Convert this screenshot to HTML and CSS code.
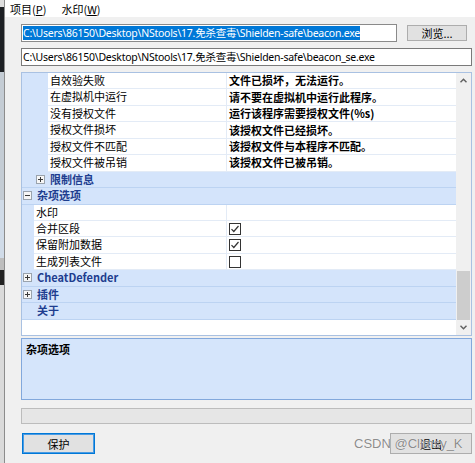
FILE: index.html
```html
<!DOCTYPE html>
<html lang="zh-CN">
<head>
<meta charset="utf-8">
<title>Shielden</title>
<link rel="stylesheet" href="styles.css">
</head>
<body>
<div class="screen">
  <div class="desk">
    <div class="dk a"></div>
    <div class="dk b"></div>
    <div class="dk c"></div>
    <div class="dk d"></div>
    <div class="dk e"></div>
    <div class="dk f"></div>
    <div class="dk g"></div>
  </div>
  <div class="win">
    <div class="menubar">
      <span class="menu">项目(<u>P</u>)</span>
      <span class="menu">水印(<u>W</u>)</span>
    </div>
    <div class="content">
      <div class="file-row">
        <div class="tb tb-in"><span class="sel">C:\Users\86150\Desktop\NStools\17.免杀查毒\Shielden-safe\beacon.exe</span></div>
        <button class="btn browse">浏览...</button>
      </div>
      <div class="tb tb-out">C:\Users\86150\Desktop\NStools\17.免杀查毒\Shielden-safe\beacon_se.exe</div>

      <div class="pg">
        <div class="pg-rows">
          <div class="row l2"><div class="gut"></div><div class="name">自效验失败</div><div class="val">文件已损坏，无法运行。</div></div>
          <div class="row l2"><div class="gut"></div><div class="name">在虚拟机中运行</div><div class="val">请不要在虚拟机中运行此程序。</div></div>
          <div class="row l2"><div class="gut"></div><div class="name">没有授权文件</div><div class="val">运行该程序需要授权文件(%s)</div></div>
          <div class="row l2"><div class="gut"></div><div class="name">授权文件损坏</div><div class="val">该授权文件已经损坏。</div></div>
          <div class="row l2"><div class="gut"></div><div class="name">授权文件不匹配</div><div class="val">该授权文件与本程序不匹配。</div></div>
          <div class="row l2"><div class="gut"></div><div class="name">授权文件被吊销</div><div class="val">该授权文件已被吊销。</div></div>
          <div class="row cat c1">
            <svg class="exp" width="9" height="9" viewBox="0 0 9 9"><rect x="0.5" y="0.5" width="8" height="8" fill="#f6f6f6" stroke="#9aa3ad"/><path d="M2 4.5h5M4.5 2v5" stroke="#3a3a3a"/></svg>
            <span>限制信息</span>
          </div>
          <div class="row cat c0">
            <svg class="exp" width="9" height="9" viewBox="0 0 9 9"><rect x="0.5" y="0.5" width="8" height="8" fill="#f6f6f6" stroke="#9aa3ad"/><path d="M2 4.5h5" stroke="#3a3a3a"/></svg>
            <span>杂项选项</span>
          </div>
          <div class="row l1"><div class="gut"></div><div class="name">水印</div><div class="val"></div></div>
          <div class="row l1"><div class="gut"></div><div class="name">合并区段</div><div class="val">
            <svg class="chk" width="12" height="12" viewBox="0 0 12 12"><rect x="0.5" y="0.5" width="11" height="11" fill="#fff" stroke="#333"/><path d="M2.5 6.2 4.8 8.5 9.5 3" fill="none" stroke="#333" stroke-width="1.2"/></svg>
          </div></div>
          <div class="row l1"><div class="gut"></div><div class="name">保留附加数据</div><div class="val">
            <svg class="chk" width="12" height="12" viewBox="0 0 12 12"><rect x="0.5" y="0.5" width="11" height="11" fill="#fff" stroke="#333"/><path d="M2.5 6.2 4.8 8.5 9.5 3" fill="none" stroke="#333" stroke-width="1.2"/></svg>
          </div></div>
          <div class="row l1"><div class="gut"></div><div class="name">生成列表文件</div><div class="val">
            <svg class="chk" width="12" height="12" viewBox="0 0 12 12"><rect x="0.5" y="0.5" width="11" height="11" fill="#fff" stroke="#333"/></svg>
          </div></div>
          <div class="row cat c0">
            <svg class="exp" width="9" height="9" viewBox="0 0 9 9"><rect x="0.5" y="0.5" width="8" height="8" fill="#f6f6f6" stroke="#9aa3ad"/><path d="M2 4.5h5M4.5 2v5" stroke="#3a3a3a"/></svg>
            <span>CheatDefender</span>
          </div>
          <div class="row cat c0">
            <svg class="exp" width="9" height="9" viewBox="0 0 9 9"><rect x="0.5" y="0.5" width="8" height="8" fill="#f6f6f6" stroke="#9aa3ad"/><path d="M2 4.5h5M4.5 2v5" stroke="#3a3a3a"/></svg>
            <span>插件</span>
          </div>
          <div class="row cat cn"><span>关于</span></div>
        </div>
        <div class="pg-scroll">
          <div class="arrow"><svg width="7" height="5" viewBox="0 0 7 5"><polyline points="0.5,4.3 3.5,1.2 6.5,4.3" fill="none" stroke="#606060" stroke-width="1.4"/></svg></div>
          <div class="track"><div class="thumb"></div></div>
          <div class="arrow"><svg width="7" height="5" viewBox="0 0 7 5"><polyline points="0.5,0.7 3.5,3.8 6.5,0.7" fill="none" stroke="#606060" stroke-width="1.4"/></svg></div>
        </div>
      </div>

      <div class="desc">杂项选项</div>
      <div class="progress"></div>
      <div class="actions">
        <button class="btn primary">保护</button>
        <button class="btn exit">退出</button>
      </div>
    </div>
  </div>
  <div class="watermark">CSDN @Climsy_K</div>
</div>
</body>
</html>
```
FILE: styles.css
```css
html, body {
  margin: 0;
  padding: 0;
}
body {
  background: #f0f0f0;
  font-family: "Noto Sans CJK SC", sans-serif;
  font-size: 11px;
  line-height: 14px;
  color: #000;
}
.screen {
  position: relative;
  display: flex;
  width: 475px;
  height: 463px;
  overflow: hidden;
}
.desk {
  width: 4px;
  flex: none;
  display: flex;
  flex-direction: column;
  border-right: 1px solid #8c8c8c;
}
.dk.a { height: 7px; background: #dedede; }
.dk.b { height: 65px; background: #1d2024; }
.dk.c { height: 128px; background: #c4ccd4; }
.dk.d { height: 58px; background: #d0dbe8; }
.dk.e { height: 12px; background: #bdbdbd; }
.dk.f { height: 15px; background: #222; }
.dk.g { flex: 1; background: #dadada; }

.win {
  flex: 1;
  display: flex;
  flex-direction: column;
}
.menubar {
  height: 17px;
  background: #fff;
  display: flex;
  align-items: center;
  gap: 15px;
  padding-left: 5px;
}
.menu u { text-decoration: underline; }

.content {
  display: flex;
  flex-direction: column;
  padding: 7px 3px 0 16px;
}
.file-row {
  display: flex;
  align-items: flex-start;
  gap: 10px;
}
.tb {
  box-sizing: border-box;
  height: 18px;
  border: 1px solid #8a8a8a;
  background: #fff;
  padding: 0 1px;
  line-height: 16px;
  white-space: nowrap;
  overflow: hidden;
  font-family: "Noto Sans", "Noto Sans CJK SC", sans-serif;
  font-size: 10.5px;
  letter-spacing: -0.25px;
}
.tb-in { width: 376px; }
.sel { background: #0078d7; color: #fff; }
.tb-out { margin-top: 6px; border-color: #7a7a7a; }

.btn {
  font: inherit;
  color: #000;
  background: #e1e1e1;
  border: 1px solid #adadad;
  padding: 0;
  box-sizing: border-box;
}
.browse {
  width: 60px;
  height: 16px;
  margin-top: 1px;
  line-height: 14px;
}

.pg {
  margin-top: 6px;
  height: 264px;
  box-sizing: border-box;
  border: 1px solid #a9c1e2;
  background: #fff;
  display: flex;
}
.pg-rows {
  flex: 1;
  display: flex;
  flex-direction: column;
}
.row {
  height: 16.45px;
  box-sizing: border-box;
  display: flex;
  flex: none;
}
.gut {
  flex: none;
  background: #d4e4fb;
}
.l2 .gut { width: 26px; }
.l1 .gut { width: 12px; }
.name, .val {
  box-sizing: border-box;
  border-bottom: 1px solid #e3ebf6;
  background: #fff;
  padding-left: 2px;
  line-height: 15px;
  white-space: nowrap;
  overflow: hidden;
}
.name {
  flex: none;
  border-right: 1px solid #e3ebf6;
}
.l2 .name { width: 179px; }
.l1 .name { width: 193px; }
.val {
  flex: 1;
  font-weight: bold;
  display: flex;
  align-items: center;
}
.chk { flex: none; }

.cat {
  background: #d4e4fb;
  border-bottom: 1px solid #bcd3f2;
  align-items: center;
  color: #1e3d8f;
  font-weight: bold;
}
.cat span { line-height: 15px; }
.exp { flex: none; margin-right: 5px; }
.c1 { padding-left: 14px; }
.c0 { padding-left: 1px; }
.cn { padding-left: 15px; }

.pg-scroll {
  width: 15px;
  flex: none;
  background: #f0f0f0;
  display: flex;
  flex-direction: column;
}
.arrow {
  height: 15px;
  display: flex;
  align-items: center;
  justify-content: center;
}
.track {
  flex: 1;
  display: flex;
  flex-direction: column;
  justify-content: flex-end;
}
.thumb {
  height: 49px;
  margin: 0 1px;
  background: #cdcdcd;
}

.desc {
  margin-top: 2px;
  height: 62px;
  box-sizing: border-box;
  border: 1px solid #82a8dc;
  background: #d5e5fb;
  padding: 3px 4px;
  font-weight: bold;
}
.progress {
  margin-top: 8px;
  height: 16px;
  box-sizing: border-box;
  border: 1px solid #bcbcbc;
  background: #e6e6e6;
}
.actions {
  margin-top: 9px;
  display: flex;
  justify-content: space-between;
}
.actions .btn { height: 21px; }
.primary {
  width: 73px;
  margin-left: 1px;
  border: 1px solid #0078d7;
  box-shadow: inset 0 0 0 1px #4a9be3;
}
.exit { width: 82px; }

.watermark {
  position: absolute;
  left: 354px;
  top: 436px;
  font-family: "Liberation Sans", sans-serif;
  font-size: 13px;
  line-height: 16px;
  color: rgba(110, 110, 110, 0.8);
  text-shadow: 0 0 1px #fff;
  white-space: nowrap;
}
```
